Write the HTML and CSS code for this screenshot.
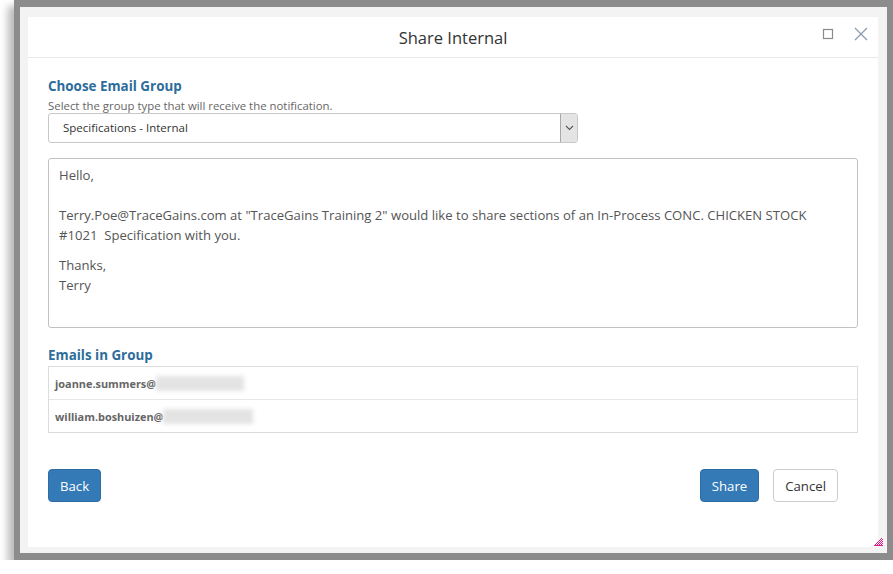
FILE: index.html
```
<!DOCTYPE html>
<html lang="en">
  <head>
    <meta charset="UTF-8" />
    <meta name="viewport" content="width=device-width, initial-scale=1.0" />
    <title>Share Internal</title>
    <link rel="stylesheet" href="styles.css">
  </head>

  <body>
    <div class="frame">
      <div class="dialog">
        <div class="dialog-header">
          <span class="dialog-title">Share Internal</span>
          <div class="header-tools">
            <svg width="12" height="12" viewBox="0 0 12 12">
              <rect x="1.5" y="1.5" width="9" height="9" fill="none" stroke="#8a8a8a" stroke-width="1.2" />
            </svg>
            <svg width="14" height="14" viewBox="0 0 14 14">
              <path d="M1 1 L13 13 M13 1 L1 13" stroke="#8a9aae" stroke-width="1.2" />
            </svg>
          </div>
        </div>

        <div class="dialog-body">
          <h4 class="section-title">Choose Email Group</h4>
          <div class="help-text">Select the group type that will receive the notification.</div>
          <div class="select">
            <span class="select-value">Specifications - Internal</span>
            <span class="select-arrow">
              <svg width="9" height="6" viewBox="0 0 9 6">
                <path d="M1 1 L4.5 4.5 L8 1" fill="none" stroke="#555" stroke-width="1.1" />
              </svg>
            </span>
          </div>

          <div class="message">
            <p>Hello,</p>
            <p class="blank">&nbsp;</p>
            <p>Terry.Poe@TraceGains.com at "TraceGains Training 2" would like to share sections of an In-Process CONC. CHICKEN STOCK<br>#1021&nbsp; Specification with you.</p>
            <p class="gap">Thanks,<br>Terry</p>
          </div>

          <h4 class="section-title emails-title">Emails in Group</h4>
          <div class="email-list">
            <div class="email-row">joanne.summers@<span class="blur w1"></span></div>
            <div class="email-row">william.boshuizen@<span class="blur w2"></span></div>
          </div>

          <div class="footer">
            <button class="btn btn-primary">Back</button>
            <div class="footer-right">
              <button class="btn btn-primary">Share</button>
              <button class="btn btn-default">Cancel</button>
            </div>
          </div>
        </div>

        <svg class="grip" width="9" height="9" viewBox="0 0 9 9">
          <g fill="#e6198a">
            <rect x="7" y="1" width="1" height="1" />
            <rect x="6" y="2" width="1" height="1" /><rect x="8" y="2" width="1" height="1" />
            <rect x="5" y="3" width="1" height="1" /><rect x="7" y="3" width="1" height="1" />
            <rect x="4" y="4" width="1" height="1" /><rect x="6" y="4" width="1" height="1" /><rect x="8" y="4" width="1" height="1" />
            <rect x="3" y="5" width="1" height="1" /><rect x="5" y="5" width="1" height="1" /><rect x="7" y="5" width="1" height="1" />
            <rect x="2" y="6" width="1" height="1" /><rect x="4" y="6" width="1" height="1" /><rect x="6" y="6" width="1" height="1" /><rect x="8" y="6" width="1" height="1" />
            <rect x="1" y="7" width="1" height="1" /><rect x="3" y="7" width="1" height="1" /><rect x="5" y="7" width="1" height="1" /><rect x="7" y="7" width="1" height="1" />
            <rect x="0" y="8" width="9" height="1" />
          </g>
        </svg>
      </div>
    </div>
  </body>
</html>
```

FILE: styles.css
```
html,
body {
  margin: 0;
  padding: 0;
  background: #fff;
  overflow: hidden;
}

body {
  font-family: "Open Sans", "Noto Sans", sans-serif;
  color: #333;
}

.frame {
  box-sizing: border-box;
  margin-left: 14px;
  width: 879px;
  height: 560px;
  border: 7px solid #8c8c8c;
  border-left-width: 6px;
  border-right-width: 6px;
  background: #f3f3f3;
  padding: 10px 9px 6px 8px;
  box-shadow: -6px 6px 8px rgba(0, 0, 0, 0.28);
}

.dialog {
  position: relative;
  height: 530px;
  background: #fff;
}

.dialog-header {
  position: relative;
  height: 40px;
  border-bottom: 1px solid #e8e8e8;
  text-align: center;
}

.dialog-title {
  font-size: 16.5px;
  line-height: 41px;
  color: #333;
}

.header-tools {
  position: absolute;
  top: 10px;
  right: 10px;
  display: flex;
  align-items: center;
  gap: 20px;
}

.dialog-body {
  padding: 18px 20px 0;
}

.section-title {
  margin: 0;
  font-size: 13.4px;
  font-weight: bold;
  line-height: 20px;
  color: #2c6d9b;
}

.help-text {
  font-size: 11.4px;
  line-height: 15px;
  color: #666;
  margin-top: 2px;
}

.select {
  box-sizing: border-box;
  display: flex;
  width: 530px;
  height: 30px;
  border: 1px solid #c8c8c8;
  border-radius: 3px;
}

.select-value {
  flex: 1;
  padding-left: 14px;
  font-size: 11.5px;
  line-height: 28px;
  color: #333;
}

.select-arrow {
  display: flex;
  align-items: center;
  justify-content: center;
  width: 16px;
  background: #e4e4e4;
  border-left: 1px solid #a8a8a8;
  border-radius: 0 2px 2px 0;
}

.message {
  box-sizing: border-box;
  margin-top: 15px;
  height: 170px;
  border: 1px solid #c2c2c2;
  border-radius: 3px;
  padding: 6px 10px;
  font-size: 13.1px;
  line-height: 20px;
  color: #555;
}

.message p {
  margin: 0;
  white-space: nowrap;
}

.message .gap {
  margin-top: 10px;
}

.emails-title {
  margin-top: 17px;
}

.email-list {
  margin-top: 1px;
  border: 1px solid #dcdcdc;
}

.email-row {
  display: flex;
  align-items: center;
  height: 32px;
  padding-left: 6px;
  font-size: 10.9px;
  font-weight: bold;
  color: #666;
}

.email-row + .email-row {
  border-top: 1px solid #e6e6e6;
}

.blur {
  display: inline-block;
  height: 15px;
  background: #e3e3e3;
  filter: blur(2px);
}

.w1 {
  width: 88px;
}

.w2 {
  width: 90px;
}

.footer {
  display: flex;
  justify-content: space-between;
  margin-top: 36px;
  padding-right: 20px;
}

.footer-right {
  display: flex;
  gap: 14px;
}

.btn {
  height: 33px;
  padding: 0 11px;
  border-radius: 4px;
  font-family: "Open Sans", "Noto Sans", sans-serif;
  font-size: 13.2px;
  cursor: pointer;
}

.btn-primary {
  background: #337ab7;
  border: 1px solid #2e6da4;
  color: #fff;
}

.btn-default {
  background: #fff;
  border: 1px solid #ccc;
  color: #333;
}

.grip {
  position: absolute;
  right: -5px;
  bottom: 1px;
}
```
